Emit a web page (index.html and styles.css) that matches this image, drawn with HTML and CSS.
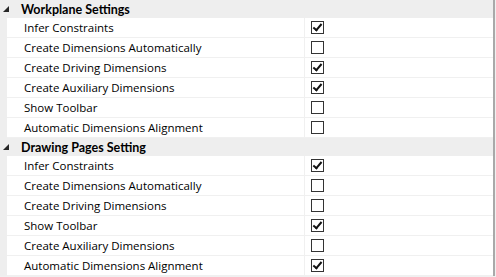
FILE: index.html
```html
<!DOCTYPE html>
<html lang="en">
<head>
    <meta charset="UTF-8">
    <title>Property Grid</title>
    <link rel="stylesheet" href="styles.css">
</head>
<body>
<div class="grid">
    <div class="category">
        <svg class="expander" width="7" height="7" viewBox="0 0 7 7"><polygon points="6,0 6,6 0,6" fill="#262626"/></svg>
        <span>Workplane Settings</span>
    </div>
    <div class="row"><div class="name">Infer Constraints</div><div class="value"><span class="check on"></span></div></div>
    <div class="row"><div class="name">Create Dimensions Automatically</div><div class="value"><span class="check"></span></div></div>
    <div class="row"><div class="name">Create Driving Dimensions</div><div class="value"><span class="check on"></span></div></div>
    <div class="row"><div class="name">Create Auxiliary Dimensions</div><div class="value"><span class="check on"></span></div></div>
    <div class="row"><div class="name">Show Toolbar</div><div class="value"><span class="check"></span></div></div>
    <div class="row"><div class="name">Automatic Dimensions Alignment</div><div class="value"><span class="check"></span></div></div>

    <div class="category">
        <svg class="expander" width="7" height="7" viewBox="0 0 7 7"><polygon points="6,0 6,6 0,6" fill="#262626"/></svg>
        <span>Drawing Pages Setting</span>
    </div>
    <div class="row"><div class="name">Infer Constraints</div><div class="value"><span class="check on"></span></div></div>
    <div class="row"><div class="name">Create Dimensions Automatically</div><div class="value"><span class="check"></span></div></div>
    <div class="row"><div class="name">Create Driving Dimensions</div><div class="value"><span class="check"></span></div></div>
    <div class="row"><div class="name">Show Toolbar</div><div class="value"><span class="check on"></span></div></div>
    <div class="row"><div class="name">Create Auxiliary Dimensions</div><div class="value"><span class="check"></span></div></div>
    <div class="row"><div class="name">Automatic Dimensions Alignment</div><div class="value"><span class="check on"></span></div></div>
</div>
</body>
</html>
```

FILE: styles.css
```css
body {
    margin: 0;
    padding: 0;
    background-color: #f0f0f0;
    font-family: "Open Sans", "Noto Sans", sans-serif;
    font-size: 11.5px;
    color: #000000;
}
.grid {
    width: 493px;
    border-right: 2px solid #a9a9a9;
    background-color: #eeeeee;
}
.category {
    height: 18px;
    display: flex;
    align-items: center;
    font-family: Lato, "Open Sans", sans-serif;
    font-weight: bold;
    font-size: 12.5px;
}
.expander {
    margin: 0 11px 0 3px;
}
.row {
    height: 19px;
    margin-left: 7px;
    display: flex;
    background-color: #ffffff;
    border-bottom: 1px solid #f0f0f0;
}
.name {
    width: 280px;
    padding-left: 17px;
    display: flex;
    align-items: center;
    border-right: 1px solid #f0f0f0;
}
.value {
    flex: 1;
    display: flex;
    align-items: center;
    padding-left: 6px;
}
.check {
    width: 11px;
    height: 11px;
    border: 1px solid #333333;
    background-color: #ffffff;
    position: relative;
}
.check.on::after {
    content: "";
    position: absolute;
    left: 3px;
    top: 0px;
    width: 3px;
    height: 7px;
    border: solid #111111;
    border-width: 0 2px 2px 0;
    transform: rotate(40deg);
}
```
